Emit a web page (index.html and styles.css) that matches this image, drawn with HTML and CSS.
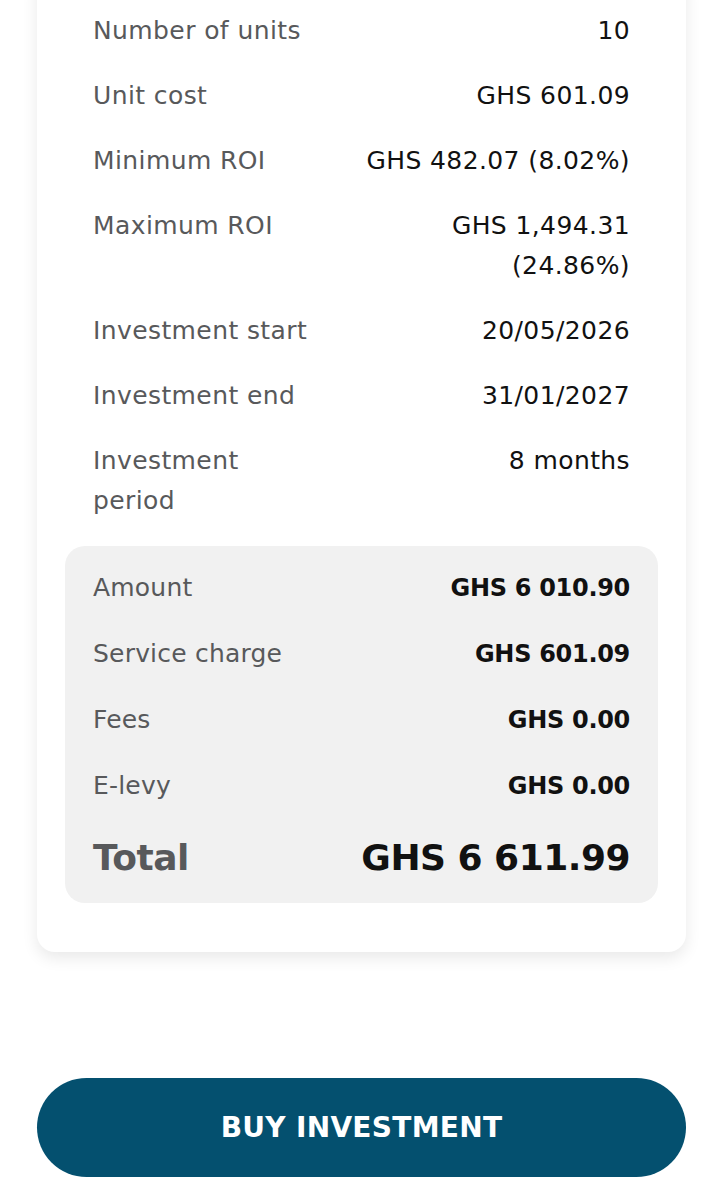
FILE: index.html
```html
<!DOCTYPE html>
<html lang="en">
<head>
    <meta charset="UTF-8">
    <meta name="viewport" content="width=device-width, initial-scale=1.0">
    <title>Investment summary</title>
    <link rel="stylesheet" href="styles.css">
</head>
<body>
    <div class="page">
        <!-- summary card, top is scrolled off -->
        <div class="card">
            <div class="row"><span class="label">Number of units</span><span class="value">10</span></div>
            <div class="row"><span class="label">Unit cost</span><span class="value">GHS 601.09</span></div>
            <div class="row"><span class="label">Minimum ROI</span><span class="value">GHS 482.07 (8.02%)</span></div>
            <div class="row"><span class="label">Maximum ROI</span><span class="value narrow">GHS 1,494.31 (24.86%)</span></div>
            <div class="row"><span class="label">Investment start</span><span class="value">20/05/2026</span></div>
            <div class="row"><span class="label">Investment end</span><span class="value">31/01/2027</span></div>
            <div class="row"><span class="label short">Investment period</span><span class="value">8 months</span></div>

            <div class="totals">
                <div class="row"><span class="label">Amount</span><span class="value strong">GHS 6 010.90</span></div>
                <div class="row"><span class="label">Service charge</span><span class="value strong">GHS 601.09</span></div>
                <div class="row"><span class="label">Fees</span><span class="value strong">GHS 0.00</span></div>
                <div class="row"><span class="label">E-levy</span><span class="value strong">GHS 0.00</span></div>
                <div class="row total"><span class="label">Total</span><span class="value">GHS 6 611.99</span></div>
            </div>
        </div>

        <button class="buy">BUY INVESTMENT</button>
    </div>
</body>
</html>
```

FILE: styles.css
```css
*{padding:0;margin:0;box-sizing:border-box;}
body{background:#fff;font-family:"DejaVu Sans","Noto Sans",sans-serif;color:#111;}
.page{padding:0 37px;}
.card{margin-top:-30px;padding:29px 56px 49px;background:#fff;border-radius:18px;box-shadow:0 6px 16px rgba(0,0,0,0.09);}
.row{display:flex;justify-content:space-between;align-items:flex-start;padding:12px 0 13px;font-size:25px;line-height:40px;letter-spacing:0.4px;}
.label{color:#58595b;}
.label.short{width:200px;}
.value{text-align:right;color:#111;}
.value.narrow{width:210px;}
.totals{margin:12px -28px 0;padding:9px 28px 6px;background:#f1f1f1;border-radius:20px;}
.totals .row{padding:13px 0;}
.totals .row .label{letter-spacing:0.2px;}
.value.strong{font-size:24px;font-weight:600;letter-spacing:-0.3px;}
.row.total{padding:15px 0;font-size:36px;line-height:48px;letter-spacing:-0.5px;}
.row.total .label{font-weight:700;letter-spacing:-0.5px;}
.row.total .value{font-weight:700;}
.buy{display:block;width:100%;height:99px;margin-top:126px;border:none;border-radius:50px;background:#04506f;color:#fff;font-family:"DejaVu Sans",sans-serif;font-size:28px;font-weight:700;letter-spacing:0.3px;cursor:pointer;}
```
